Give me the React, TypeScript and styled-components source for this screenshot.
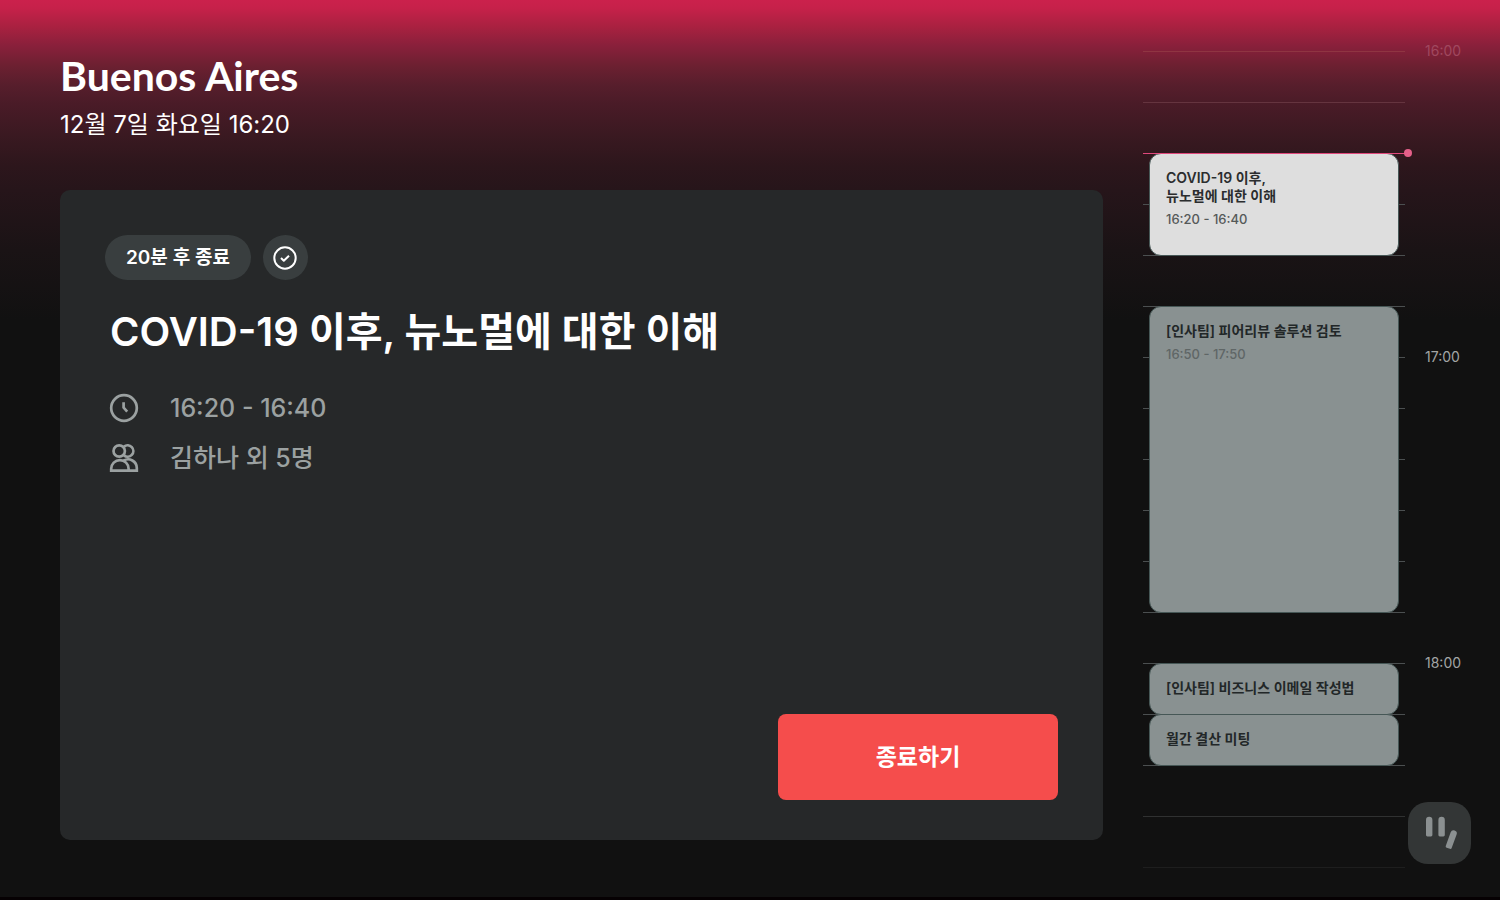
import React from "react";
import styled, { createGlobalStyle } from "styled-components";

const GlobalStyle = createGlobalStyle`
  * { box-sizing: border-box; }
  body {
    margin: 0;
    background: #111111;
    color: #ffffff;
    font-family: Inter, "Noto Sans CJK KR", sans-serif;
  }
  h1, h2, h3, p, ul { margin: 0; padding: 0; }
`;

const SLOT = 51;
const SLOT_COUNT = 17;
const DAY_START = 16 * 60;

const Page = styled.div`
  position: relative;
  display: grid;
  grid-template-columns: minmax(0, 1fr) 317px;
  column-gap: 40px;
  min-height: 100vh;
  padding: 0 40px 0 60px;
  border-bottom: 3px solid #060103;
  background: linear-gradient(
    180deg,
    #cb214c 0px,
    #c6214a 8px,
    #ac2141 25px,
    #8a203b 45px,
    #6c2031 66px,
    #571e2c 85px,
    #491b27 105px,
    #3a1921 135px,
    #2d161c 165px,
    #26151a 190px,
    #1a1315 250px,
    #111111 320px
  );
`;

const Main = styled.main`
  display: flex;
  flex-direction: column;
  padding: 52px 0 57px;
`;

const RoomName = styled.h1`
  font-family: Lato, Inter, sans-serif;
  font-size: 41px;
  line-height: 48px;
  font-weight: 700;
`;

const Today = styled.p`
  margin-top: 9px;
  font-size: 24px;
  line-height: 32px;
  font-weight: 400;
`;

const Card = styled.section`
  display: flex;
  flex: 1;
  flex-direction: column;
  margin-top: 49px;
  padding: 45px 45px 40px;
  border-radius: 10px;
  background: #262829;
`;

const Badges = styled.div`
  display: flex;
  gap: 12px;
`;

const Badge = styled.span`
  padding: 1px 21px 0;
  border-radius: 23px;
  background: #393e3f;
  font-size: 19px;
  line-height: 44px;
  font-weight: 600;
`;

const RoundButton = styled.button`
  display: grid;
  place-items: center;
  width: 45px;
  height: 45px;
  padding: 0;
  border: 0;
  border-radius: 50%;
  background: #393e3f;
  color: #ffffff;
`;

const MeetingTitle = styled.h2`
  margin: 22px 0 0 5px;
  font-size: 40px;
  line-height: 60px;
  font-weight: 600;
`;

const Details = styled.ul`
  display: grid;
  gap: 10px;
  margin: 26px 0 0 4px;
  list-style: none;
`;

const Detail = styled.li`
  display: flex;
  align-items: center;
  gap: 31px;
  color: #9ba1a1;
  font-size: 25px;
  line-height: 40px;
  font-weight: 500;
`;

const EndButton = styled.button`
  align-self: flex-end;
  width: 280px;
  height: 86px;
  margin-top: auto;
  padding: 0 0 4px;
  border: 0;
  border-radius: 8px;
  background: #f54d4c;
  color: #ffffff;
  font: inherit;
  font-size: 23px;
  font-weight: 700;
`;

const Timeline = styled.aside`
  display: grid;
  grid-template-columns: minmax(0, 1fr) 35px;
  grid-template-rows: repeat(${SLOT_COUNT}, ${SLOT}px);
  column-gap: 20px;
  align-content: start;
  margin-top: 51px;
  height: ${SLOT * (SLOT_COUNT - 1) + 1}px;
`;

const Slot = styled.div<{ $row: number; $color: string }>`
  grid-column: 1;
  grid-row: ${(p) => p.$row};
  height: 1px;
  background: ${(p) => p.$color};
`;

const HourLabel = styled.time<{ $row: number; $faded: boolean }>`
  grid-column: 2;
  grid-row: ${(p) => p.$row};
  margin-top: -10px;
  color: ${(p) => (p.$faded ? "#a0485f" : "#a3a5a5")};
  font-size: 14px;
  line-height: 20px;
  white-space: nowrap;
`;

const Event = styled.article<{ $row: number; $span: number; $active: boolean }>`
  grid-column: 1;
  grid-row: ${(p) => p.$row} / span ${(p) => p.$span};
  margin: 0 6px -1px;
  padding: 15px 16px;
  border: 1px solid #465756;
  border-radius: 12px;
  background: ${(p) => (p.$active ? "#dedede" : "#899191")};
  color: ${(p) => (p.$active ? "#2b2d2e" : "#222728")};
`;

const EventTitle = styled.h3`
  font-size: 14px;
  line-height: 18px;
  font-weight: 600;
  white-space: pre-line;
`;

const EventTime = styled.p<{ $active: boolean }>`
  margin-top: 5px;
  color: ${(p) => (p.$active ? "#555959" : "#5f6666")};
  font-size: 13px;
  line-height: 18px;
  font-weight: 500;
`;

const NowLine = styled.div<{ $row: number }>`
  position: relative;
  grid-column: 1;
  grid-row: ${(p) => p.$row};
  height: 1px;
  background: #e0487c;

  &::after {
    content: "";
    position: absolute;
    top: -4px;
    right: -7px;
    width: 8px;
    height: 8px;
    border-radius: 50%;
    background: #e45f89;
  }
`;

const LogoButton = styled.button`
  position: absolute;
  right: 29px;
  bottom: 33px;
  width: 63px;
  height: 62px;
  padding: 0;
  border: 0;
  border-radius: 20px;
  background: #333636;
`;

type Meeting = { title: string; start: number; end: number; active?: boolean };

const meetings: Meeting[] = [
  { title: "COVID-19 이후,\n뉴노멀에 대한 이해", start: 980, end: 1000, active: true },
  { title: "[인사팀] 피어리뷰 솔루션 검토", start: 1010, end: 1070 },
  { title: "[인사팀] 비즈니스 이메일 작성법", start: 1080, end: 1090 },
  { title: "월간 결산 미팅", start: 1090, end: 1100 },
];

const hours = [16, 17, 18];

const rowOf = (minutes: number) => (minutes - DAY_START) / 10 + 1;

const clock = (minutes: number) =>
  `${Math.floor(minutes / 60)}:${String(minutes % 60).padStart(2, "0")}`;

const slotColor = (index: number) => {
  if (index === 0) return "#8f3542";
  if (index === 1) return "#65343f";
  if (index === SLOT_COUNT - 1) return "#1e1e1e";
  if (index === SLOT_COUNT - 2) return "#303131";
  return "#4b4f50";
};

const CheckIcon = () => (
  <svg width="24" height="24" viewBox="0 0 24 24" fill="none" stroke="currentColor" strokeWidth="2" aria-hidden="true">
    <circle cx="12" cy="12" r="10.7" />
    <path d="M8 12l2.8 2.7 5.2-5" strokeLinejoin="round" />
  </svg>
);

const ClockIcon = () => (
  <svg width="30" height="30" viewBox="0 0 30 30" fill="none" stroke="currentColor" strokeWidth="2.7" aria-hidden="true">
    <circle cx="15" cy="15" r="12.8" />
    <path d="M14.6 9.2v5.4l3.6 4" />
  </svg>
);

const PeopleIcon = () => (
  <svg width="30" height="30" viewBox="0 0 30 30" fill="none" stroke="currentColor" strokeWidth="2.7" aria-hidden="true">
    <circle cx="10.2" cy="8" r="5.7" />
    <path d="M15 3.6a5.7 5.7 0 1 1 0 8.8" />
    <path d="M2.2 27.6v-1.8a8.7 8.7 0 0 1 17.4 0v1.8z" />
    <path d="M14.6 17.6a8.7 8.7 0 0 1 13.2 7.4v2.6H19" />
  </svg>
);

const LogoIcon = () => (
  <svg width="63" height="62" viewBox="0 0 63 62" fill="#8b9091" aria-hidden="true">
    <path d="M18 18a3.1 3.1 0 0 1 6.4 0v15a1.4 1.4 0 0 1-1.4 1.4h-3.6A1.4 1.4 0 0 1 18 33z" />
    <path d="M30.4 18a3.1 3.1 0 0 1 6.4 0v15a1.4 1.4 0 0 1-1.4 1.4h-3.6a1.4 1.4 0 0 1-1.4-1.4z" />
    <path transform="rotate(20 43.3 37.7)" d="M40.2 31a3.1 3.1 0 0 1 6.3 0v14.4a1.4 1.4 0 0 1-1.4 1.4h-3.5a1.4 1.4 0 0 1-1.4-1.4z" />
  </svg>
);

export default function App() {
  return (
    <>
      <GlobalStyle />
      <Page>
        <Main>
          <RoomName>Buenos Aires</RoomName>
          <Today>12월 7일 화요일 16:20</Today>
          <Card>
            <Badges>
              <Badge>20분 후 종료</Badge>
              <RoundButton type="button" aria-label="체크인">
                <CheckIcon />
              </RoundButton>
            </Badges>
            <MeetingTitle>COVID-19 이후, 뉴노멀에 대한 이해</MeetingTitle>
            <Details>
              <Detail>
                <ClockIcon />
                16:20 - 16:40
              </Detail>
              <Detail>
                <PeopleIcon />
                김하나 외 5명
              </Detail>
            </Details>
            <EndButton type="button">종료하기</EndButton>
          </Card>
        </Main>
        <Timeline>
          {Array.from({ length: SLOT_COUNT }, (_, i) => (
            <Slot key={i} $row={i + 1} $color={slotColor(i)} />
          ))}
          {hours.map((hour) => (
            <HourLabel key={hour} $row={rowOf(hour * 60)} $faded={hour === 16}>
              {hour}:00
            </HourLabel>
          ))}
          {meetings.map((m) => (
            <Event
              key={m.start}
              $row={rowOf(m.start)}
              $span={(m.end - m.start) / 10}
              $active={!!m.active}
            >
              <EventTitle>{m.title}</EventTitle>
              {m.end - m.start > 10 && (
                <EventTime $active={!!m.active}>
                  {clock(m.start)} - {clock(m.end)}
                </EventTime>
              )}
            </Event>
          ))}
          <NowLine $row={rowOf(980)} />
        </Timeline>
        <LogoButton type="button" aria-label="메뉴">
          <LogoIcon />
        </LogoButton>
      </Page>
    </>
  );
}
